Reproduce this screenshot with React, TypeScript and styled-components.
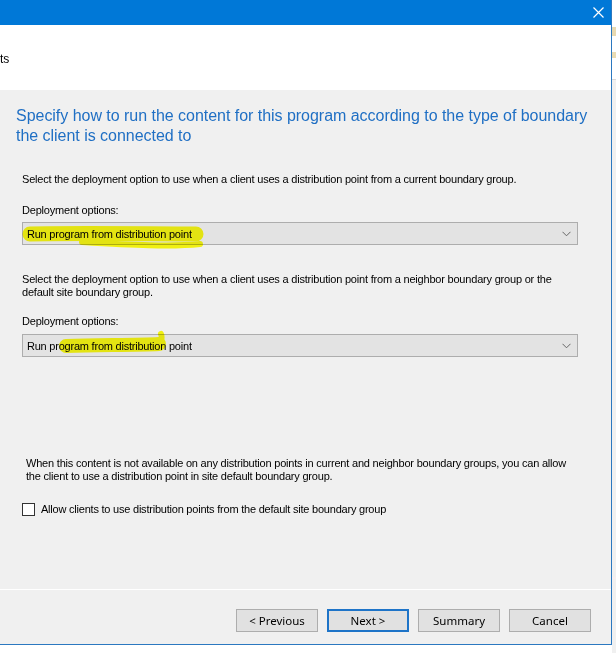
import React from "react";
import styled, { createGlobalStyle } from "styled-components";

const Global = createGlobalStyle`
  html, body { margin: 0; padding: 0; background: #ffffff; }
  body { width: 616px; height: 653px; overflow: hidden; font-family: "Liberation Sans", Arial, sans-serif; }
`;

const Screen = styled.div`
  display: flex;
  width: 616px;
  height: 653px;
  background: #ffffff;
`;

const Window = styled.div`
  width: 611px;
  height: 644px;
  display: flex;
  flex-direction: column;
  border-right: 1px solid #2b78c0;
  border-bottom: 1px solid #2b78c0;
  background: #f0f0f0;
`;

const Sliver = styled.div`
  flex: 1;
  background:
    linear-gradient(#ffffff 0 27px, #e8d9b0 27px 36px, #ffffff 36px 52px, #eadcb4 52px 58px, #ffffff 58px 79px, #d8d8d8 79px 80px, #f0f0f0 80px 577px, #f6eef0 577px 579px, #f0f0f0 579px 100%);
`;

const TitleBar = styled.div`
  height: 25px;
  background: #0078d7;
  display: flex;
  justify-content: flex-end;
  align-items: center;
  padding-right: 7px;
`;

const Header = styled.div`
  height: 65px;
  background: #ffffff;
  display: flex;
  align-items: center;
  font-size: 12px;
  color: #000;
  padding-top: 2px;
  box-sizing: border-box;
`;

const Content = styled.div`
  height: 499px;
  box-sizing: border-box;
  padding: 16px 0 0 0;
  display: flex;
  flex-direction: column;
`;

const Heading = styled.h1`
  margin: 0 0 0 16px;
  width: 582px;
  font-weight: normal;
  font-size: 16px;
  line-height: 20px;
  letter-spacing: -0.03px;
  color: #1f6fc4;
`;

const Text = styled.p<{ $top: number; $left?: number; $width?: number }>`
  margin: ${(p) => p.$top}px 0 0 ${(p) => p.$left ?? 22}px;
  width: ${(p) => p.$width ?? 556}px;
  font-size: 11px;
  line-height: 13px;
  letter-spacing: -0.2px;
  color: #000;
`;

const ComboWrap = styled.div<{ $top: number }>`
  position: relative;
  margin: ${(p) => p.$top}px 0 0 22px;
  width: 556px;
`;

const Combo = styled.div`
  height: 21px;
  border: 1px solid #adadad;
  background: #e3e3e3;
  display: flex;
  align-items: center;
  justify-content: space-between;
  padding: 0 6px 0 4px;
  font-size: 11px;
  letter-spacing: -0.22px;
  color: #000;
`;

const ComboLabel = styled.span`
  position: relative;
  z-index: 1;
`;

const Highlight = styled.svg`
  position: absolute;
  left: 0;
  top: 0;
  overflow: visible;
  mix-blend-mode: multiply;
  pointer-events: none;
  z-index: 2;
`;

const CheckRow = styled.label<{ $top: number }>`
  display: flex;
  align-items: center;
  gap: 6px;
  margin: ${(p) => p.$top}px 0 0 22px;
  font-size: 11px;
  letter-spacing: -0.22px;
  line-height: 13px;
  color: #000;
`;

const Box = styled.span`
  width: 11px;
  height: 11px;
  border: 1px solid #333333;
  background: #ffffff;
`;

const Footer = styled.div`
  flex: 1;
  border-top: 1px solid #ffffff;
  display: flex;
  justify-content: flex-end;
  align-items: flex-start;
  gap: 9px;
  padding: 19px 20px 0 0;
`;

const Button = styled.button<{ $primary?: boolean }>`
  width: 82px;
  height: 23px;
  box-sizing: border-box;
  border: ${(p) => (p.$primary ? "2px solid #1e74c8" : "1px solid #adadad")};
  background: #e1e1e1;
  font-family: "Noto Sans", "Open Sans", sans-serif;
  font-size: 11.5px;
  color: #000;
  padding: 0;
  line-height: 1;
`;

const Chevron = () => (
  <svg width="9" height="6" viewBox="0 0 9 6">
    <polyline points="0.5,0.8 4.5,4.8 8.5,0.8" fill="none" stroke="#666" strokeWidth="1" />
  </svg>
);

const CloseX = () => (
  <svg width="11" height="11" viewBox="0 0 11 11">
    <path d="M0.5 0.5 L10.5 10.5 M10.5 0.5 L0.5 10.5" stroke="#ffffff" strokeWidth="1.2" />
  </svg>
);

const YELLOW = "#ffff14";

export default function App() {
  return (
    <>
      <Global />
      <Screen>
        <Window>
          <TitleBar>
            <CloseX />
          </TitleBar>
          <Header>ts</Header>
          <Content>
            <Heading>
              Specify how to run the content for this program according to the type of boundary the client is connected to
            </Heading>
            <Text $top={27}>
              Select the deployment option to use when a client uses a distribution point from a current boundary group.
            </Text>
            <Text $top={18}>Deployment options:</Text>
            <ComboWrap $top={5}>
              <Combo>
                <ComboLabel>Run program from distribution point</ComboLabel>
                <Chevron />
              </Combo>
              <Highlight width="190" height="30">
                <path d="M8 12 C 60 11, 130 12, 174 12" stroke={YELLOW} strokeWidth="15" strokeLinecap="round" fill="none" />
                <path d="M60 20 C 110 23, 150 25, 178 22" stroke={YELLOW} strokeWidth="6" strokeLinecap="round" fill="none" />
              </Highlight>
            </ComboWrap>
            <Text $top={28}>
              Select the deployment option to use when a client uses a distribution point from a neighbor boundary group or the default site boundary group.
            </Text>
            <Text $top={16}>Deployment options:</Text>
            <ComboWrap $top={6}>
              <Combo>
                <ComboLabel>Run program from distribution point</ComboLabel>
                <Chevron />
              </Combo>
              <Highlight width="150" height="30">
                <path d="M44 12 C 80 11, 115 11, 137 10" stroke={YELLOW} strokeWidth="14" strokeLinecap="round" fill="none" />
                <path d="M138 10 C 140 5, 140 2, 139 0" stroke={YELLOW} strokeWidth="6" strokeLinecap="round" fill="none" />
              </Highlight>
            </ComboWrap>
            <Text $top={100} $left={26} $width={550}>
              When this content is not available on any distribution points in current and neighbor boundary groups, you can allow the client to use a distribution point in site default boundary group.
            </Text>
            <CheckRow $top={20}>
              <Box />
              Allow clients to use distribution points from the default site boundary group
            </CheckRow>
          </Content>
          <Footer>
            <Button>&lt; Previous</Button>
            <Button $primary>Next &gt;</Button>
            <Button>Summary</Button>
            <Button>Cancel</Button>
          </Footer>
        </Window>
        <Sliver />
      </Screen>
    </>
  );
}
